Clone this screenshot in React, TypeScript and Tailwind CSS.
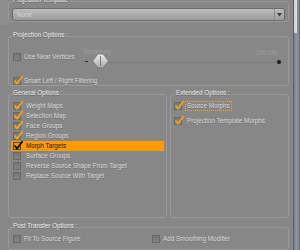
import React from "react";

const font = { fontFamily: '"Liberation Sans", Arial, sans-serif' };

function Box({ checked = false, hot = false }: { checked?: boolean; hot?: boolean }) {
  return (
    <span
      className={
        hot
          ? "relative block w-[8px] h-[8px] shrink-0 border border-[#6a4300] bg-[#f29a0c]"
          : "relative block w-[8px] h-[8px] shrink-0 border border-[#686868] bg-gradient-to-b from-[#767676] to-[#848484]"
      }
    >
      {checked && (
        <svg className="absolute left-[-1px] top-[-1px] overflow-visible" width="9" height="8" viewBox="0 0 9 8">
          <path
            d="M2 4 L4 6.6 L9.2 -0.2"
            fill="none"
            stroke={hot ? "#111111" : "#f5a214"}
            strokeWidth="1.8"
            strokeLinecap="round"
            strokeLinejoin="round"
          />
        </svg>
      )}
    </span>
  );
}

function Legend({ children, left }: { children: React.ReactNode; left: string }) {
  return (
    <span
      className={`absolute top-[-6px] ${left} px-[1px] bg-[#878787] text-[6.3px] leading-[8px] text-[#ececec] whitespace-nowrap [text-shadow:0_1px_0_#6c6c6c]`}
    >
      {children}
    </span>
  );
}

function Item({ label, checked = false, hot = false }: { label: string; checked?: boolean; hot?: boolean }) {
  return (
    <div
      className={
        hot
          ? "ml-[2px] w-[153px] h-[10px] pl-[2px] flex items-center gap-[5px] bg-[#ff9b00]"
          : "ml-[2px] w-[153px] h-[10px] pl-[2px] flex items-center gap-[5px]"
      }
    >
      <Box checked={checked} hot={hot} />
      <span
        className={
          hot
            ? "text-[6.3px] leading-[10px] text-[#1a1a1a] whitespace-nowrap"
            : "text-[6.3px] leading-[10px] text-[#d9d9d9] whitespace-nowrap [text-shadow:0_1px_0_#747474]"
        }
      >
        {label}
      </span>
    </div>
  );
}

function Thumb() {
  return (
    <svg width="17" height="16" viewBox="0 0 17 16" className="absolute left-[10px] top-[5px]">
      <defs>
        <linearGradient id="tg" x1="0" y1="0" x2="0" y2="1">
          <stop offset="0" stopColor="#ececec" />
          <stop offset="1" stopColor="#a9a9a9" />
        </linearGradient>
      </defs>
      <polygon
        points="0.5,8 4,3.5 6,1 11,1 13,3.5 16.5,8 13,12.5 11,15 6,15 4,12.5"
        fill="url(#tg)"
        stroke="#6d6d6d"
        strokeWidth="0.8"
      />
      <line x1="8.5" y1="3" x2="8.5" y2="13" stroke="#7a7a7a" strokeWidth="1" />
    </svg>
  );
}

const txt = "text-[6.3px] leading-[8px] text-[#d9d9d9] whitespace-nowrap [text-shadow:0_1px_0_#747474]";

export default function App() {
  return (
    <div className="w-[300px] h-[250px] overflow-hidden flex bg-[#878787]" style={font}>
      {/* left strip */}
      <div className="w-[8px] shrink-0 flex flex-col">
        <div className="h-[25px] bg-[#8e8e8e]" />
      </div>

      {/* content */}
      <div className="w-[284px] shrink-0 flex flex-col">
        {/* Projection Template */}
        <div className="relative mt-[1px] w-[281px] h-[25px] border border-[#9a9a9a] rounded-[3px] pt-[6px] pl-[3px]">
          <Legend left="left-[3px]">Projection Template :</Legend>
          <div className="w-[273px] h-[13px] rounded-[3px] border border-[#6c6c6c] bg-gradient-to-b from-[#bdbdbd] to-[#9b9b9b] flex items-center">
            <span className="pl-[4px] flex-1 text-[6.3px] leading-[11px] text-[#d4d4d4]">None</span>
            <div className="w-[10px] h-full border-l border-[#8a8a8a] flex items-center justify-center">
              <svg width="5" height="4" viewBox="0 0 5 4">
                <polygon points="0,0 5,0 2.5,3.5" fill="#3c3c3c" />
              </svg>
            </div>
          </div>
        </div>

        {/* Projection Options */}
        <div className="relative mt-[14px] w-[281px] h-[55px] border border-[#9a9a9a] rounded-[3px] pl-[4px] pt-[11px]">
          <Legend left="left-[3px]">Projection Options :</Legend>
          <div className="flex h-[22px]">
            <div className="w-[69px] mt-[5px] h-[8px] flex items-center gap-[3px]">
              <Box />
              <span className={txt}>Use Near Vertices</span>
            </div>
            <div className="relative w-[203px] h-[22px]">
              <span className="absolute left-[1px] top-[0px] text-[6.3px] leading-[8px] text-[#a0a0a0]">Sensitivity</span>
              <span className="absolute right-[8px] top-[1px] text-[6.3px] leading-[8px] text-[#a0a0a0]">100.0%</span>
              <span className="absolute left-[3px] top-[13px] w-[3px] h-[1px] bg-[#2e2e2e]" />
              <span className="absolute left-[26px] right-[1px] top-[14px] h-[1px] bg-[#7b7b7b]" />
              <span className="absolute left-[195px] top-[12px] w-[4px] h-[4px] rounded-full bg-[#1e1e1e]" />
              <Thumb />
            </div>
          </div>
          <div className="mt-[7px] h-[8px] flex items-center gap-[3px]">
            <Box checked />
            <span className={txt}>Smart Left / Right Filtering</span>
          </div>
        </div>

        {/* General + Extended */}
        <div className="mt-[8px] flex gap-[3px]">
          <div className="relative w-[159px] h-[124px] border border-[#9a9a9a] rounded-[3px] pt-[6px]">
            <Legend left="left-[3px]">General Options :</Legend>
            <Item label="Weight Maps" checked />
            <Item label="Selection Map" checked />
            <Item label="Face Groups" checked />
            <Item label="Region Groups" checked />
            <Item label="Morph Targets" checked hot />
            <Item label="Surface Groups" />
            <Item label="Reverse Source Shape From Target" />
            <Item label="Replace Source With Target" />
          </div>
          <div className="relative w-[119px] h-[124px] border border-[#9a9a9a] rounded-[3px] pt-[6px] pl-[3px] flex flex-col gap-[5px]">
            <Legend left="left-[4px]">Extended Options :</Legend>
            <div className="h-[10px] flex items-center gap-[3px]">
              <Box checked />
              <span className={`border border-dotted border-[#f5a214] px-[1px] ${txt}`}>Source Morphs</span>
            </div>
            <div className="h-[10px] flex items-center gap-[3px]">
              <Box checked />
              <span className={`border border-transparent px-[1px] ${txt}`}>Projection Template Morphs</span>
            </div>
          </div>
        </div>

        {/* Post Transfer */}
        <div className="relative mt-[9px] w-[281px] h-[40px] border border-[#9a9a9a] rounded-[3px] pt-[7px] pl-[4px] flex">
          <Legend left="left-[3px]">Post Transfer Options :</Legend>
          <div className="w-[139px] h-[8px] flex items-center gap-[3px]">
            <Box />
            <span className={txt}>Fit To Source Figure</span>
          </div>
          <div className="h-[8px] flex items-center gap-[3px]">
            <Box />
            <span className={txt}>Add Smoothing Modifier</span>
          </div>
        </div>
      </div>

      {/* scrollbar */}
      <div className="w-[8px] shrink-0 flex">
        <div className="w-[1px] bg-[#888888]" />
        <div className="w-[1px] bg-[#5e5e5e]" />
        <div className="w-[3px] flex flex-col">
          <div className="h-[33px] bg-gradient-to-r from-[#c9ced6] to-[#e2e5ea]" />
          <div className="flex-1 bg-gradient-to-r from-[#6f7f98] to-[#8d9bb0]" />
        </div>
        <div className="w-[3px] bg-[#8b8b8b] border-r border-[#6e6e6e]" />
      </div>
    </div>
  );
}
